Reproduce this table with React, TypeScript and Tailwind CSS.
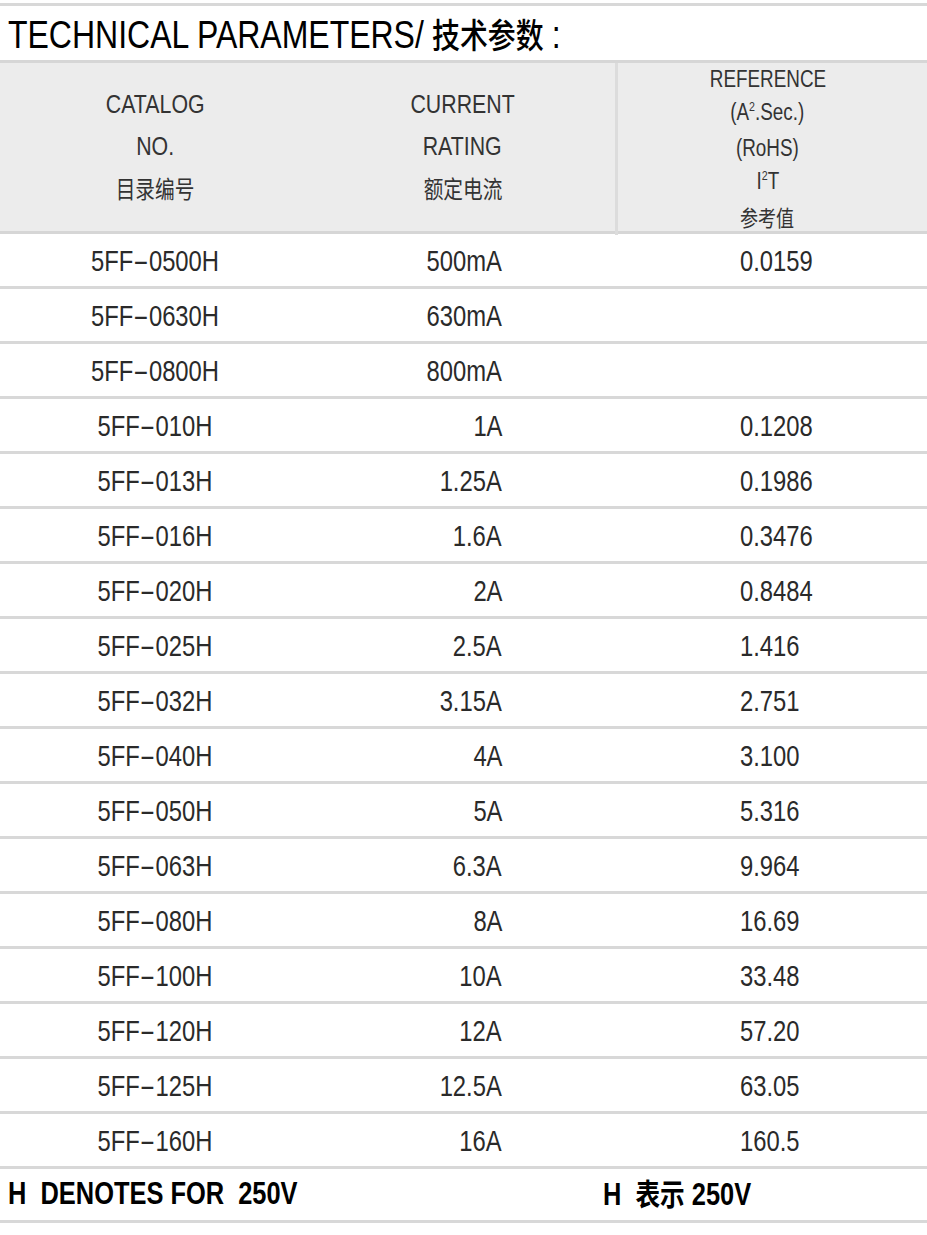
import React from "react";

const rows: [string, string, string][] = [
  ["5FF-0500H", "500mA", "0.0159"],
  ["5FF-0630H", "630mA", ""],
  ["5FF-0800H", "800mA", ""],
  ["5FF-010H", "1A", "0.1208"],
  ["5FF-013H", "1.25A", "0.1986"],
  ["5FF-016H", "1.6A", "0.3476"],
  ["5FF-020H", "2A", "0.8484"],
  ["5FF-025H", "2.5A", "1.416"],
  ["5FF-032H", "3.15A", "2.751"],
  ["5FF-040H", "4A", "3.100"],
  ["5FF-050H", "5A", "5.316"],
  ["5FF-063H", "6.3A", "9.964"],
  ["5FF-080H", "8A", "16.69"],
  ["5FF-100H", "10A", "33.48"],
  ["5FF-120H", "12A", "57.20"],
  ["5FF-125H", "12.5A", "63.05"],
  ["5FF-160H", "16A", "160.5"],
];

const sans = "font-['Liberation_Sans','Noto_Sans_CJK_SC',sans-serif]";
const cjk = "font-['Noto_Sans_CJK_SC',sans-serif]";

function Catalog({ value }: { value: string }) {
  const [head, tail] = value.split("-");
  return (
    <span className="inline-block scale-x-[0.82] whitespace-nowrap">
      {head}
      <span className="inline-block w-[19px] text-center">
        <span className="inline-block scale-x-[2]">-</span>
      </span>
      {tail}
    </span>
  );
}

export default function App() {
  return (
    <div className={`w-[927px] h-[1235px] bg-white text-[#222] ${sans} overflow-hidden`}>
      <div className="h-[3px] mt-[3px] bg-[#d8d8d8]" />
      <div className="h-[54px] flex items-center pl-[8px] text-black">
        <span className="inline-block origin-left scale-x-[0.82] whitespace-nowrap text-[39px] leading-none pt-[2px]">
          TECHNICAL PARAMETERS/
          <span className={`ml-[10px] text-[34px] ${cjk} font-medium`}>技术参数</span>
          <span className="ml-[10px]">:</span>
        </span>
      </div>
      {/* header */}
      <div className="grid grid-cols-[310px_305px_312px] bg-[#ececec] border-t-[3px] border-b-[3px] border-[#d6d6d6] h-[174px]">
        <div className="flex flex-col items-center justify-center text-[26px] leading-[42px] text-[#333] pb-[6px]">
          <span className="inline-block scale-x-[0.82]">CATALOG</span>
          <span className="inline-block scale-x-[0.82]">NO.</span>
          <span className={`inline-block scale-x-[0.82] text-[24px] ${cjk}`}>目录编号</span>
        </div>
        <div className="flex flex-col items-center justify-center text-[26px] leading-[42px] text-[#333] pb-[6px]">
          <span className="inline-block scale-x-[0.82]">CURRENT</span>
          <span className="inline-block scale-x-[0.82]">RATING</span>
          <span className={`inline-block scale-x-[0.82] text-[24px] ${cjk}`}>额定电流</span>
        </div>
        <div className="flex flex-col items-center justify-center text-[23px] leading-[33px] text-[#333] border-l-[3px] border-[#dcdcdc] pr-[10px] pb-[4px]">
          <span className="inline-block scale-x-[0.82]">REFERENCE</span>
          <span className="inline-block scale-x-[0.82]">
            (A<span className="text-[13px] relative -top-[9px]">2</span>.Sec.)
          </span>
          <span className="inline-block scale-x-[0.82]">(RoHS)</span>
          <span className="inline-block scale-x-[0.82]">
            I<span className="text-[13px] relative -top-[9px]">2</span>T
          </span>
          <span className={`inline-block scale-x-[0.82] text-[22px] leading-[30px] ${cjk}`}>参考值</span>
        </div>
      </div>
      {/* rows */}
      <div>
        {rows.map(([a, b, c]) => (
          <div
            key={a}
            className="grid grid-cols-[310px_305px_312px] h-[55px] border-b-[3px] border-[#d8d8d8] items-center text-[29px] leading-none text-[#2a2a2a]"
          >
            <div className="flex justify-center pt-[2px]">
              <Catalog value={a} />
            </div>
            <div className="flex justify-end pr-[113px] pt-[2px]">
              <span className="inline-block origin-right scale-x-[0.82]">{b}</span>
            </div>
            <div className="flex pl-[125px] pt-[2px]">
              <span className="inline-block origin-left scale-x-[0.82]">{c}</span>
            </div>
          </div>
        ))}
      </div>
      {/* footer */}
      <div className="h-[54px] border-b-[3px] border-[#d8d8d8] grid grid-cols-[603px_1fr] items-center text-[31px] font-bold text-black leading-none">
        <div className="pl-[8px] pb-[3px]">
          <span className="inline-block origin-left scale-x-[0.82] whitespace-pre">H  DENOTES FOR  250V</span>
        </div>
        <div className="pb-[3px]">
          <span className="inline-block origin-left scale-x-[0.82] whitespace-pre">
            H  <span className={`text-[30px] ${cjk}`}>表示</span> 250V
          </span>
        </div>
      </div>
    </div>
  );
}
